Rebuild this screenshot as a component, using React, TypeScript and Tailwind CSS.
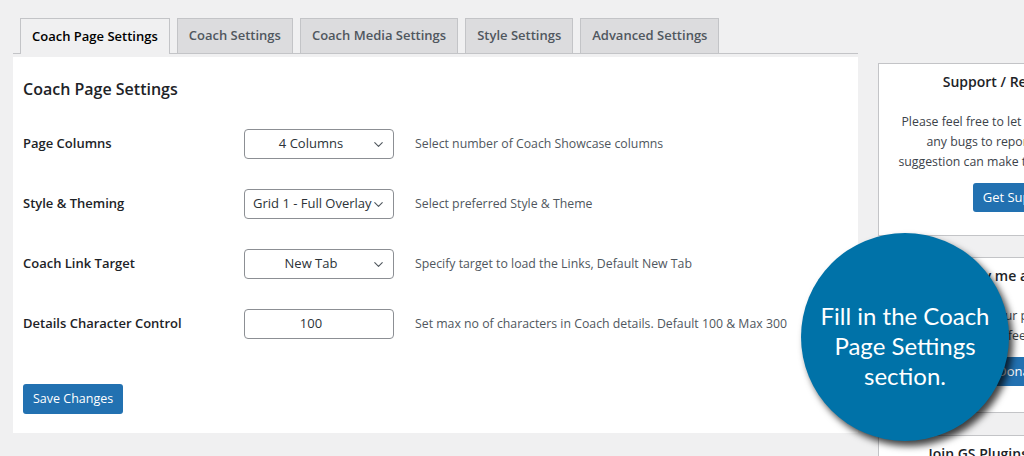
import { ChevronDown } from 'lucide-react';

const TABS = [
  'Coach Page Settings',
  'Coach Settings',
  'Coach Media Settings',
  'Style Settings',
  'Advanced Settings',
];

type Row = { label: string; value: string; select: boolean; help: string };

const ROWS: Row[] = [
  { label: 'Page Columns', value: '4 Columns', select: true, help: 'Select number of Coach Showcase columns' },
  { label: 'Style & Theming', value: 'Grid 1 - Full Overlay', select: true, help: 'Select preferred Style & Theme' },
  { label: 'Coach Link Target', value: 'New Tab', select: true, help: 'Specify target to load the Links, Default New Tab' },
  { label: 'Details Character Control', value: '100', select: false, help: 'Set max no of characters in Coach details. Default 100 & Max 300' },
];

const font = { fontFamily: '"Open Sans", "Noto Sans", sans-serif' };

function Field({ row }: { row: Row }) {
  return (
    <div className="flex h-[60px] items-center">
      <div className="w-[221px] text-[13px] font-semibold text-[#1d2327]">{row.label}</div>
      <div className="relative flex h-[30px] w-[150px] items-center rounded-[4px] border border-[#8c8f94] bg-white">
        <div className="w-full overflow-hidden whitespace-nowrap pl-2 pr-6 text-center text-[13px] text-[#2c3338]">
          {row.value}
        </div>
        {row.select && (
          <ChevronDown className="absolute right-[7px] top-[7px] h-[15px] w-[15px] text-[#50575e]" strokeWidth={1.75} />
        )}
      </div>
      <div className="ml-[21px] whitespace-nowrap text-[12.3px] text-[#50575e]">{row.help}</div>
    </div>
  );
}

function SideBox({
  title,
  lines,
  button,
  className,
}: {
  title: string;
  lines: string[];
  button?: string;
  className?: string;
}) {
  return (
    <div className={`border border-[#c3c4c7] bg-white ${className ?? ''}`}>
      <div className="pt-[7px] text-center text-[14px] font-semibold text-[#1d2327]">{title}</div>
      <div className="mt-[20px] text-center text-[12.3px] leading-[20px] text-[#3c434a]">
        {lines.map((l) => (
          <div key={l}>{l}</div>
        ))}
      </div>
      {button && (
        <div className="mt-[11px] flex justify-center">
          <span className="rounded-[3px] bg-[#2271b1] px-[10px] py-[5px] text-[13px] leading-[19px] text-white">
            {button}
          </span>
        </div>
      )}
    </div>
  );
}

export default function App() {
  return (
    <div className="relative h-[456px] w-[1024px] overflow-hidden bg-[#f0f0f1]" style={font}>
      <div className="flex gap-[20px] pl-[13px] pt-[18px]">
        <div className="w-[845px] shrink-0">
          <div className="flex items-end gap-[7px] border-b border-[#c3c4c7] pl-[7px]">
            {TABS.map((t, i) =>
              i === 0 ? (
                <div
                  key={t}
                  className="-mb-px flex h-[36px] items-center border border-b-0 border-[#c3c4c7] bg-[#f0f0f1] px-[11px] text-[13px] font-semibold text-[#000]"
                >
                  {t}
                </div>
              ) : (
                <div
                  key={t}
                  className="flex h-[35px] items-center border border-b-0 border-[#c3c4c7] bg-[#dcdcde] px-[11px] text-[13px] font-semibold text-[#50575e]"
                >
                  {t}
                </div>
              ),
            )}
          </div>
          <div className="mt-[3px] bg-white px-[10px] pb-[19px] pt-[20px]">
            <h2 className="h-[24px] text-[16px] font-semibold leading-[24px] text-[#1d2327]">Coach Page Settings</h2>
            <div className="mt-[13px]">
              {ROWS.map((r) => (
                <Field key={r.label} row={r} />
              ))}
            </div>
            <button className="mt-[30px] h-[30px] rounded-[3px] bg-[#2271b1] px-[10px] text-[12.5px] text-white">
              Save Changes
            </button>
          </div>
        </div>
        <div className="mt-[45px] w-[283px] shrink-0">
          <SideBox
            title="Support / Report a bug"
            lines={[
              'Please feel free to let us know if you have',
              'any bugs to report. Your report /',
              'suggestion can make the plugin awesome!',
            ]}
            button="Get Support"
            className="h-[173px]"
          />
          <SideBox
            title="Buy me a coffee"
            lines={['If you like our plugin, please', 'buy me a coffee to inspire me']}
            button="Donate"
            className="mt-[21px] h-[156px]"
          />
          <SideBox title="Join GS Plugins Community" lines={[]} className="mt-[22px] h-[80px]" />
        </div>
      </div>

      <div className="absolute left-[801px] top-[233px] flex h-[208px] w-[208px] items-center justify-center rounded-full bg-[#0072a8] pt-[18px] shadow-[4px_5px_7px_rgba(0,0,0,0.75)]">
        <div
          className="text-center text-[24px] leading-[30px] text-white"
          style={{ fontFamily: 'Lato, "Open Sans", sans-serif' }}
        >
          Fill in the Coach
          <br />
          Page Settings
          <br />
          section.
        </div>
      </div>
    </div>
  );
}
